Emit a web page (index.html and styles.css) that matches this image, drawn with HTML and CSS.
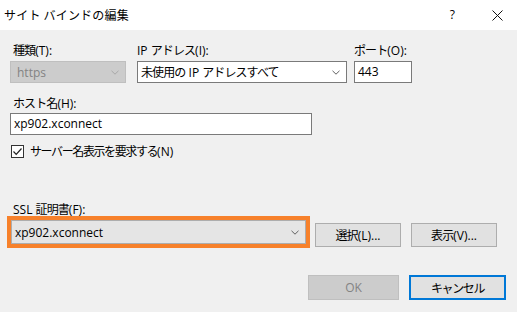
FILE: index.html
```html
<!DOCTYPE html>
<html lang="ja">
<head>
  <meta charset="UTF-8" />
  <title>サイト バインドの編集</title>
  <link rel="stylesheet" href="styles.css">
</head>
<body>
  <div class="dialog">
    <div class="titlebar">
      <span class="title">サイト バインドの編集</span>
      <span class="help">?</span>
      <span class="close">
        <svg width="11" height="11" viewBox="0 0 11 11"><path d="M0.5 0.5 L10.5 10.5 M10.5 0.5 L0.5 10.5" stroke="#111" stroke-width="1" fill="none"/></svg>
      </span>
    </div>

    <div class="content">
      <div class="row-top">
        <div class="field f-type">
          <label><span class="jp">種類</span>(T):</label>
          <div class="combo disabled">
            <span>https</span>
            <svg class="chev" width="8" height="5" viewBox="0 0 8 5"><path d="M0.5 0.8 L4 4.2 L7.5 0.8" stroke="#a8a8a8" fill="none"/></svg>
          </div>
        </div>
        <div class="field f-ip">
          <label>IP <span class="jp">アドレス</span>(I):</label>
          <div class="combo white">
            <span><span class="jp">未使用の</span> IP <span class="jp">アドレスすべて</span></span>
            <svg class="chev" width="8" height="5" viewBox="0 0 8 5"><path d="M0.5 0.8 L4 4.2 L7.5 0.8" stroke="#606060" fill="none"/></svg>
          </div>
        </div>
        <div class="field f-port">
          <label><span class="jp">ポート</span>(O):</label>
          <div class="textbox">443</div>
        </div>
      </div>

      <div class="field f-host">
        <label><span class="jp">ホスト名</span>(H):</label>
        <div class="textbox">xp902.xconnect</div>
      </div>

      <div class="check-row">
        <span class="checkbox">
          <svg width="11" height="11" viewBox="0 0 11 11"><path d="M1.5 5.5 L4.2 8.3 L9.5 2.5" stroke="#222" stroke-width="1.2" fill="none"/></svg>
        </span>
        <span class="check-text"><span class="jp kana">サーバー名表示を要求する</span>(N)</span>
      </div>

      <label class="ssl-label">SSL <span class="jp">証明書</span>(F):</label>
      <div class="ssl-row">
        <div class="highlight">
          <div class="combo gray">
            <span>xp902.xconnect</span>
            <svg class="chev" width="8" height="5" viewBox="0 0 8 5"><path d="M0.5 0.8 L4 4.2 L7.5 0.8" stroke="#606060" fill="none"/></svg>
          </div>
        </div>
        <button class="btn b-select"><span class="jp">選択</span>(L)...</button>
        <button class="btn b-view"><span class="jp">表示</span>(V)...</button>
      </div>

      <div class="footer">
        <button class="btn b-ok" disabled>OK</button>
        <button class="btn b-cancel"><span class="jp kana">キャンセル</span></button>
      </div>
    </div>
  </div>
</body>
</html>
```

FILE: styles.css
```css
body {
  margin: 0;
  background: #f0f0f0;
  font-family: "Open Sans", "Noto Sans CJK JP", sans-serif;
  font-size: 12px;
  color: #000;
}

.dialog {
  width: 517px;
  height: 312px;
  background: #f0f0f0;
  overflow: hidden;
}

.jp {
  font-family: "Noto Sans CJK JP", sans-serif;
  letter-spacing: -0.9px;
}

.jp.kana {
  letter-spacing: -1.4px;
}

.titlebar {
  height: 30px;
  background: #fff;
  display: flex;
  align-items: center;
  padding-left: 4px;
}

.title {
  flex: 1;
  font-family: "Noto Sans CJK JP", sans-serif;
  font-size: 12px;
  letter-spacing: 0.2px;
  margin-top: -1px;
}

.help {
  font-family: "Open Sans", sans-serif;
  font-size: 12px;
  margin-right: 37px;
  margin-top: -1px;
}

.close {
  display: flex;
  margin-right: 14px;
}

.content {
  padding: 12px 0 0 10px;
}

label {
  display: block;
  height: 15px;
  line-height: 15px;
  padding-left: 3px;
  white-space: nowrap;
}

.row-top {
  display: flex;
  gap: 11px;
}

.field label {
  margin-bottom: 4px;
}

.f-type { width: 116px; }
.f-ip { width: 210px; }
.f-ip label { padding-left: 0; }
.f-port { width: 58px; margin-left: -4px; }
.f-port label { padding-left: 0; }

.combo {
  height: 22px;
  box-sizing: border-box;
  display: flex;
  align-items: center;
  justify-content: space-between;
  padding: 0 6px 0 3px;
  white-space: nowrap;
}

.combo.disabled {
  background: #cccccc;
  border: 1px solid #bfbfbf;
  color: #838383;
  padding-left: 6px;
}

.combo.white {
  background: #fff;
  border: 1px solid #7a7a7a;
}

.combo.gray {
  background: #e5e5e5;
  border: 1px solid #adadad;
  height: 24px;
  width: 295px;
}

.textbox {
  height: 22px;
  box-sizing: border-box;
  background: #fff;
  border: 1px solid #7a7a7a;
  line-height: 20px;
  padding-left: 3px;
}

.f-host {
  margin-top: 12px;
  width: 302px;
}

.f-host label {
  margin-bottom: 3px;
}

.check-row {
  display: flex;
  align-items: center;
  gap: 6px;
  margin-top: 9px;
  padding-left: 1px;
  height: 14px;
}

.checkbox {
  width: 13px;
  height: 13px;
  box-sizing: border-box;
  border: 1px solid #333;
  background: #fff;
  display: flex;
  align-items: center;
  justify-content: center;
}

.ssl-label {
  margin-top: 44px;
  height: 14px;
  line-height: 14px;
}

.ssl-row {
  display: flex;
  align-items: flex-start;
  margin-left: -3px;
}

.highlight {
  border: 4px solid #f7812b;
}

.btn {
  font-family: "Open Sans", "Noto Sans CJK JP", sans-serif;
  font-size: 12px;
  background: #e1e1e1;
  border: 1px solid #adadad;
  color: #000;
  padding: 0;
  margin: 0;
  box-sizing: border-box;
}

.b-select {
  width: 86px;
  height: 24px;
  margin-top: 7px;
  margin-left: 5px;
}

.b-view {
  width: 86px;
  height: 24px;
  margin-top: 7px;
  margin-left: 10px;
}

.footer {
  display: flex;
  gap: 10px;
  margin-top: 27px;
  padding-left: 298px;
}

.b-ok {
  width: 91px;
  height: 25px;
  background: #cccccc;
  border-color: #bfbfbf;
  color: #838383;
}

.b-cancel {
  width: 97px;
  height: 25px;
  border: 2px solid #0078d7;
}
```
